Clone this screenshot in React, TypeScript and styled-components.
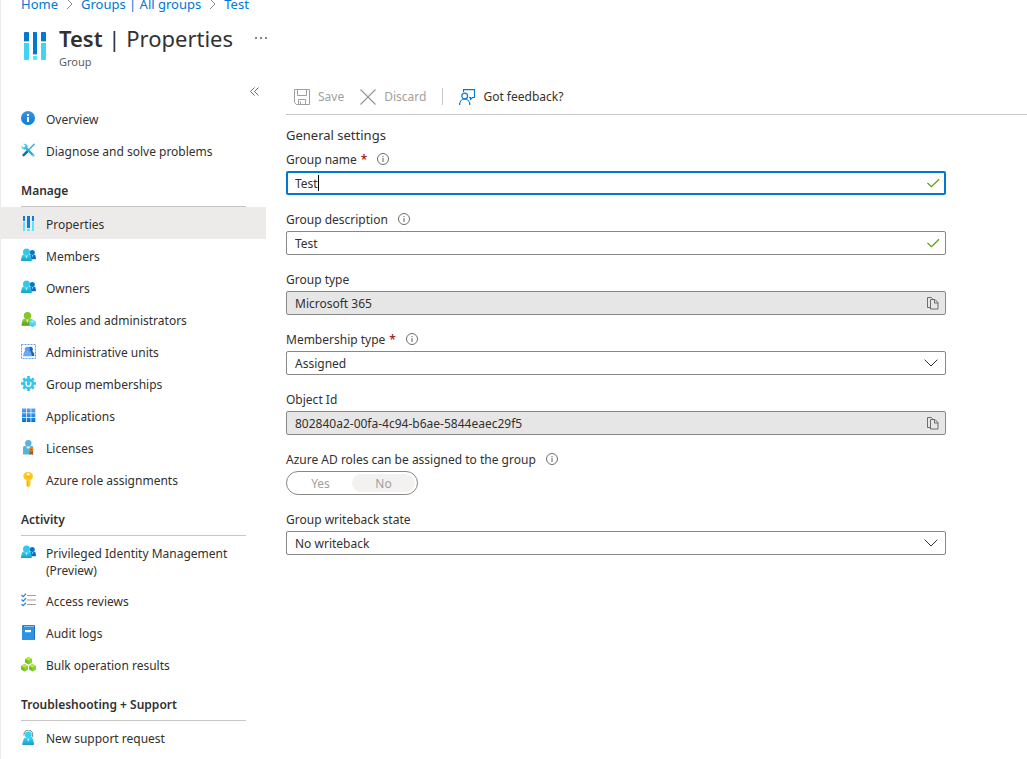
import React from "react";
import styled, { createGlobalStyle, css } from "styled-components";

const GlobalStyle = createGlobalStyle`
  *, *::before, *::after { box-sizing: border-box; }
  body {
    margin: 0;
    background: #fff;
    color: #323130;
    font-family: "Noto Sans", "Open Sans", sans-serif;
    font-size: 12px;
    line-height: 17px;
  }
  button, input, select { font: inherit; color: inherit; }
`;

const Page = styled.div`
  min-height: 100vh;
  border-left: 1px solid #edebe9;
  overflow: hidden;
`;

const Breadcrumb = styled.nav`
  display: flex;
  align-items: center;
  gap: 8px;
  height: 8px;
  padding-left: 20px;
  font-size: 13px;
  line-height: 8px;
  white-space: nowrap;
  a { color: #0078d4; text-decoration: none; }
`;

const Header = styled.header`
  display: flex;
  align-items: flex-start;
  padding: 16px 20px 0;
  height: 71px;
`;

const HeaderIcon = styled.span`
  display: flex;
  width: 28px;
  margin: 8px 10px 0 0;
`;

const Title = styled.h1`
  margin: 0;
  font-size: 22px;
  line-height: 28px;
  font-weight: 400;
  white-space: nowrap;
  strong { font-weight: 600; }
`;

const Subtitle = styled.div`
  margin-top: 1px;
  color: #605e5c;
  font-size: 11px;
  line-height: 17px;
`;

const IconButton = styled.button`
  display: flex;
  align-items: center;
  justify-content: center;
  width: 24px;
  height: 24px;
  padding: 0;
  border: 0;
  background: none;
  color: #605e5c;
`;

const MoreButton = styled(IconButton)`
  margin: 2px 0 0 16px;
`;

const Body = styled.div`
  display: flex;
  align-items: flex-start;
`;

const Sidebar = styled.nav`
  flex: none;
  width: 265px;
`;

const CollapseRow = styled.div`
  display: flex;
  justify-content: flex-end;
  height: 23px;
`;

const NavHeading = styled.h2`
  display: flex;
  align-items: flex-end;
  height: 41px;
  margin: 0 20px;
  padding-bottom: 7px;
  border-bottom: 1px solid #c8c6c4;
  font-size: 12px;
  line-height: 17px;
  font-weight: 600;
`;

const NavList = styled.ul`
  margin: 0;
  padding: 0;
  list-style: none;
`;

const NavLink = styled.a<{ $active?: boolean }>`
  display: flex;
  gap: 9px;
  min-height: 32px;
  padding: 9px 20px 5px;
  background: ${(p) => (p.$active ? "#edebe9" : "transparent")};
  color: inherit;
  text-decoration: none;
  svg { flex: none; }
`;

const Main = styled.main`
  flex: 1;
  min-width: 0;
  padding-left: 20px;
`;

const Toolbar = styled.div`
  display: flex;
  align-items: center;
  height: 36px;
  padding: 0 8px;
  border-bottom: 1px solid #c8c6c4;
`;

const ToolButton = styled.button`
  display: flex;
  align-items: center;
  gap: 8px;
  margin-right: 16px;
  padding: 0;
  border: 0;
  background: none;
  color: #323130;
  white-space: nowrap;
  &:disabled { color: #a19f9d; }
`;

const Divider = styled.span`
  width: 1px;
  height: 17px;
  margin-right: 16px;
  background: #c8c6c4;
`;

const Form = styled.form`
  display: flex;
  flex-direction: column;
  gap: 12px;
  max-width: 660px;
  padding-top: 12px;
  margin-right: 20px;
`;

const FormTitle = styled.h2`
  margin: 0 0 -12px;
  font-size: 13px;
  line-height: 17px;
  height: 20px;
  font-weight: 400;
`;

const Field = styled.div``;

const LabelRow = styled.div`
  display: flex;
  align-items: center;
  gap: 10px;
  height: 24px;
`;

const Required = styled.span`
  color: #a4262c;
  font-weight: 600;
`;

type BoxState = "normal" | "focused" | "readonly";

const Box = styled.div<{ $state: BoxState }>`
  position: relative;
  display: flex;
  align-items: center;
  height: 24px;
  padding: 0 5px 0 8px;
  border: 1px solid #8a8886;
  border-radius: 2px;
  background: ${(p) => (p.$state === "readonly" ? "#e6e6e6" : "#fff")};
  ${(p) =>
    p.$state === "focused" &&
    css`
      padding: 0 4px 0 7px;
      border: 2px solid #0078d4;
    `}
`;

const TextInput = styled.input<{ $fit?: boolean }>`
  flex: ${(p) => (p.$fit ? "none" : "1")};
  ${(p) => p.$fit && "field-sizing: content;"}
  min-width: 0;
  padding: 0;
  border: 0;
  outline: 0;
  background: none;
  line-height: 17px;
`;

const Caret = styled.span`
  width: 1px;
  height: 16px;
  background: #000;
`;

const Trailing = styled.span`
  display: flex;
  margin-left: auto;
`;

const Select = styled.select`
  position: absolute;
  inset: 0;
  width: 100%;
  padding: 0 28px 0 8px;
  border: 0;
  outline: 0;
  background: none;
  appearance: none;
`;

const CopyButton = styled(IconButton)`
  width: 14px;
  height: 14px;
`;

const Toggle = styled.div`
  display: flex;
  width: 132px;
  height: 24px;
  padding: 2px;
  border: 1px solid #8a8886;
  border-radius: 12px;
`;

const ToggleOption = styled.label`
  flex: 1;
  display: flex;
  align-items: center;
  justify-content: center;
  border-radius: 10px;
  color: #a19f9d;
  &:has(input:checked) { background: #f3f2f1; }
  input {
    appearance: none;
    width: 0;
    height: 0;
    margin: 0;
  }
`;

const Svg = ({ children, size = 16, box = 16 }: { children: React.ReactNode; size?: number; box?: number }) => (
  <svg width={size} height={size} viewBox={`0 0 ${box} ${box}`} fill="none" aria-hidden="true">
    {children}
  </svg>
);

const GradientDefs = styled.svg`
  display: block;
`;

const Gradients = () => (
  <GradientDefs width="0" height="0" aria-hidden="true">
    <defs>
      <linearGradient id="cyan" x1="0" y1="0" x2="0" y2="1">
        <stop offset="0" stopColor="#32d4f5" />
        <stop offset="1" stopColor="#1e9cc4" />
      </linearGradient>
      <linearGradient id="blue" x1="0" y1="0" x2="0" y2="1">
        <stop offset="0" stopColor="#5ea0ef" />
        <stop offset="1" stopColor="#0078d4" />
      </linearGradient>
      <linearGradient id="green" x1="0" y1="0" x2="0" y2="1">
        <stop offset="0" stopColor="#86d633" />
        <stop offset="1" stopColor="#5e9624" />
      </linearGradient>
    </defs>
  </GradientDefs>
);

const HeaderBars = () => (
  <svg width="28" height="30" viewBox="0 0 28 30" aria-hidden="true">
    <path d="M3 11h5v16a1 1 0 0 1-1 1H4a1 1 0 0 1-1-1zM20 11h5v16a1 1 0 0 1-1 1h-3a1 1 0 0 1-1-1z" fill="#42d3f2" />
    <path d="M12 24h4v3a1 1 0 0 1-1 1h-2a1 1 0 0 1-1-1z" fill="#50e6ff" />
    <path d="M4 0h3a1 1 0 0 1 1 1v8H3V1a1 1 0 0 1 1-1zM21 0h3a1 1 0 0 1 1 1v8h-5V1a1 1 0 0 1 1-1zM12 0h3a1 1 0 0 1 1 1v21h-4z" fill="#0078d4" />
    <path d="M3 9h5v1H3zM20 9h5v1h-5zM12 22h4v1h-4z" fill="#c8c6c4" />
  </svg>
);

const InfoFilled = () => (
  <Svg>
    <circle cx="7" cy="7" r="7" fill="url(#blue)" />
    <circle cx="7" cy="7" r="6.6" fill="#1a86dc" opacity=".5" />
    <path d="M6 6h2v5H6zM6 3h2v2H6z" fill="#fff" />
  </Svg>
);

const Tools = () => (
  <Svg>
    <path d="M13.2 1.2 8 6.5" stroke="#32a9d6" strokeWidth="1.3" strokeLinecap="round" />
    <path d="M7.2 7.6 2.6 12.2" stroke="#0f6cbd" strokeWidth="2.6" strokeLinecap="round" />
    <path d="m4.5 4.5 7.8 7.8" stroke="#1fb2dc" strokeWidth="2.4" strokeLinecap="round" />
    <path d="M2.200.8 4.600 2.600 4 4.300 2.100 4.600.5 2.600C.3 5 1.800 6.800 4 6.700L6.800 4C6.800 2 4.800.2 2.200.8z" fill="#32c8ee" />
    <circle cx="12.100" cy="12.100" r=".7" fill="#fff" />
  </Svg>
);

const Bars = () => (
  <Svg>
    <path d="M2 6h2v9H2zM11 6h2v9h-2zM6 13h3v2H6z" fill="#50e6ff" />
    <path d="M2 0h2v5H2zM11 0h2v5h-2zM6 0h3v12H6z" fill="#0f7cd6" />
  </Svg>
);

const People = () => (
  <Svg>
    <circle cx="11.300" cy="4.500" r="2.500" fill="#0078d4" />
    <path d="M9 6.800h4a1.500 1.500 0 0 1 1.600 1.300l.4 2.200a.8.8 0 0 1-.8 1H9z" fill="#0f6cc8" />
    <path d="m10.800 7.200.8 1.800.8-1.800z" fill="#cfe4fa" />
    <circle cx="5.500" cy="4" r="3.500" fill="#32c8ee" />
    <path d="M3 6.500h5a2 2 0 0 1 2 1.600l.8 3.600a1 1 0 0 1-1 1.300H1a1 1 0 0 1-1-1.300l.9-3.600A2 2 0 0 1 3 6.500z" fill="url(#cyan)" />
    <path d="m4.200 7.500 1.300 3 1.300-3z" fill="#b5eefb" />
  </Svg>
);

const RolePerson = () => (
  <Svg>
    <circle cx="6.500" cy="3.800" r="3.700" fill="#86c727" />
    <path d="M3.500 6.800h6a2 2 0 0 1 2 1.600l.8 4a1 1 0 0 1-1 1.300H1.500a1 1 0 0 1-1-1.300l1-4a2 2 0 0 1 2-1.600z" fill="url(#green)" />
    <path d="m5 7.500 1.500 3.500L8 7.500z" fill="#d7efb5" />
    <path d="m11.500 7.500 3.300 2v3.700l-3.300 2-3.300-2V9.500z" fill="#50d0f0" />
    <path d="m11.500 7.500 3.300 2-3.300 1.900-3.300-1.900z" fill="#7fe3fb" />
  </Svg>
);

const AdminUnits = () => (
  <Svg>
    <rect x=".5" y=".5" width="14" height="14" stroke="#5ea0ef" strokeDasharray="2 1" />
    <circle cx="9.500" cy="5.200" r="2.400" fill="#1266bf" />
    <path d="M8 6.500h3l2.200 3V12H8z" fill="#1266bf" />
    <circle cx="6.300" cy="5.200" r="2.500" fill="#5ea0ef" />
    <path d="M4.200 7h4.300a1.500 1.500 0 0 1 1.400 1l1.200 4.200H2L3 8a1.300 1.300 0 0 1 1.200-1z" fill="#6aa9f4" />
  </Svg>
);

const Gear = () => (
  <Svg>
    <g stroke="#32bfe8" strokeWidth="2.600">
      <path d="M7.500 0v15M0 7.500h15M2.300 2.300l10.400 10.400M12.700 2.300 2.300 12.700" />
    </g>
    <circle cx="7.500" cy="7.500" r="5.600" fill="#32c8ee" />
    <path d="M5.200 6v2a2.300 2.300 0 0 0 4.600 0V6" stroke="#fff" strokeWidth="1.300" />
    <path d="m3.800 6.700 1.400-1.800 1.400 1.800z" fill="#fff" />
  </Svg>
);

const AppGrid = () => (
  <Svg>
    <path
      d="M1 .5h4v4H1zM5.700.5h3.900v4H5.700zM10.300.5h4v4h-4zM1 5.300h4v4H1zM5.700 5.300h3.900v4H5.700zM10.300 5.300h4v4h-4zM1 10.100h4v4H1zM5.700 10.100h3.900v4H5.700zM10.300 10.100h4v4h-4z"
      fill="url(#blue)"
    />
  </Svg>
);

const License = () => (
  <Svg>
    <circle cx="7.300" cy="3.300" r="3.200" fill="#59b4d9" />
    <path d="M3.500 6h7.700a1 1 0 0 1 1 1v7.500H2V7.500A1.500 1.500 0 0 1 3.500 6z" fill="#59b4d9" />
    <path d="M5 6.500h4.600L7.300 9z" fill="#e9f6fb" />
    <path d="M8.600 11h3.400v4l-1.700-1-1.700 1z" fill="#a5582a" />
    <circle cx="10.300" cy="9.600" r="2.100" fill="#e8871e" />
    <circle cx="10.300" cy="9.600" r=".9" fill="#b85a1a" />
  </Svg>
);

const KeyIcon = () => (
  <Svg>
    <path
      d="M7.200 0c3 0 4.800 1.900 4.800 4.200 0 1.800-1.200 3.200-2.600 4v5.300L7.200 15.500 5.500 14V8.200C3.700 7.400 2.300 6 2.300 4.200 2.300 1.900 4.200 0 7.200 0z"
      fill="#ffc81f"
    />
    <circle cx="7.200" cy="2.300" r="1.200" fill="#fff" />
    <path d="M6.400 9.500v4.600" stroke="#f0a81a" />
    <path d="M4.500 5h5.400" stroke="#f0a81a" strokeWidth=".8" />
  </Svg>
);

const Checklist = () => (
  <Svg>
    <path d="M6 2.500h9M6 7h9M6 11.500h9" stroke="#a0a0a0" strokeWidth="1.200" />
    <path d="m.5 2 1.700 1.600L5 .6M.5 6.500l1.700 1.600L5 5.100M.5 11l1.700 1.600L5 9.600" stroke="#2f80d8" strokeWidth="1.300" />
  </Svg>
);

const Book = () => (
  <Svg>
    <path d="M2.500 0H13a1 1 0 0 1 1 1v13a1 1 0 0 1-1 1H2.500A1.500 1.500 0 0 1 1 13.500v-12A1.500 1.500 0 0 1 2.500 0z" fill="#1a6fc0" />
    <path d="M3 .8h10v1.500H3z" fill="#9fcdf5" />
    <path d="M2.500 1.800H12a1 1 0 0 1 1 1V14a1 1 0 0 1-1 1H2.500A1.500 1.500 0 0 1 1 13.500V2.500z" fill="#2f93e4" />
    <path d="M4 5h6v2.200H4z" fill="#fff" />
  </Svg>
);

const Cube = ({ x, y }: { x: number; y: number }) => (
  <g transform={`translate(${x} ${y})`}>
    <path d="m3.500 0 3.500 1.900v3.700L3.500 7.500 0 5.600V1.900z" fill="#76bc2d" />
    <path d="m3.500 0 3.500 1.900-3.500 1.800L0 1.900z" fill="#b4ec36" />
    <path d="m3.500 3.700 3.500-1.800v3.700L3.500 7.500z" fill="#86d633" />
  </g>
);

const Cubes = () => (
  <Svg>
    <Cube x={4} y={0} />
    <Cube x={0} y={7} />
    <Cube x={8} y={7} />
  </Svg>
);

const SupportPerson = () => (
  <Svg>
    <path d="M3 5.500V4.300a4.200 4.200 0 0 1 8.600 0v1.900c0 1-.8 1.500-1.800 1.500" stroke="#767676" strokeWidth="1" />
    <circle cx="7.300" cy="4.800" r="3.400" fill="#32d4f5" />
    <path d="M4.500 7.800h5.600a2 2 0 0 1 2 1.600l1 4.300a1 1 0 0 1-1 1.300H2.300a1 1 0 0 1-1-1.300l1.200-4.300a2 2 0 0 1 2-1.600z" fill="url(#cyan)" />
    <path d="m6 8.500 1.300 3.500 1.300-3.500z" fill="#b5eefb" />
  </Svg>
);

const Chevron = () => (
  <svg width="7" height="12" viewBox="0 0 7 12" fill="none" aria-hidden="true">
    <path d="m1 1 5 5-5 5" stroke="#8a8886" />
  </svg>
);

const InfoOutline = () => (
  <svg width="12" height="12" viewBox="0 0 12 12" fill="none" role="img" aria-label="Information">
    <circle cx="6" cy="6" r="5.500" stroke="#605e5c" strokeWidth=".9" />
    <path d="M6 5v4M6 3v1.100" stroke="#605e5c" />
  </svg>
);

const Check = () => (
  <svg width="14" height="12" viewBox="0 0 14 12" fill="none" aria-hidden="true">
    <path d="m1.500 6 4 3.700 7.500-7.400" stroke="#57a300" strokeWidth="1.200" />
  </svg>
);

const Copy = () => (
  <Svg size={14} box={14}>
    <path d="M4.500 11.500h-3V1.500h4l1.200 1.200M4.500 3.500h4.500l3 3v6.500H4.500zM8.500 3.500v3.500h3.500" stroke="#605e5c" strokeWidth=".9" />
  </Svg>
);

const SelectArrow = styled.svg`
  margin: 0 2px 0 auto;
`;

const Dropdown = ({ id, value }: { id: string; value: string }) => (
  <Box $state="normal">
    <SelectArrow width="14" height="8" viewBox="0 0 14 8" fill="none" aria-hidden="true">
      <path d="m.7.700 6.300 6.300L13.300.700" stroke="#323130" strokeWidth="1" />
    </SelectArrow>
    <Select id={id} defaultValue={value}>
      <option>{value}</option>
    </Select>
  </Box>
);

const ReadOnly = ({ id, value }: { id: string; value: string }) => (
  <Box $state="readonly">
    <TextInput id={id} value={value} readOnly />
    <CopyButton type="button" aria-label="Copy to clipboard">
      <Copy />
    </CopyButton>
  </Box>
);

interface LabelProps {
  htmlFor?: string;
  id?: string;
  text: string;
  required?: boolean;
  info?: boolean;
}

const LabelText = styled.span`
  display: flex;
  gap: 4px;
`;

const FieldLabel = ({ htmlFor, id, text, required, info }: LabelProps) => (
  <LabelRow>
    <LabelText>
      <label htmlFor={htmlFor} id={id}>{text}</label>
      {required && <Required>*</Required>}
    </LabelText>
    {info && <InfoOutline />}
  </LabelRow>
);

interface Item {
  label: string;
  icon: React.ReactNode;
  active?: boolean;
}

const sections: { title?: string; items: Item[] }[] = [
  {
    items: [
      { label: "Overview", icon: <InfoFilled /> },
      { label: "Diagnose and solve problems", icon: <Tools /> },
    ],
  },
  {
    title: "Manage",
    items: [
      { label: "Properties", icon: <Bars />, active: true },
      { label: "Members", icon: <People /> },
      { label: "Owners", icon: <People /> },
      { label: "Roles and administrators", icon: <RolePerson /> },
      { label: "Administrative units", icon: <AdminUnits /> },
      { label: "Group memberships", icon: <Gear /> },
      { label: "Applications", icon: <AppGrid /> },
      { label: "Licenses", icon: <License /> },
      { label: "Azure role assignments", icon: <KeyIcon /> },
    ],
  },
  {
    title: "Activity",
    items: [
      { label: "Privileged Identity Management (Preview)", icon: <People /> },
      { label: "Access reviews", icon: <Checklist /> },
      { label: "Audit logs", icon: <Book /> },
      { label: "Bulk operation results", icon: <Cubes /> },
    ],
  },
  {
    title: "Troubleshooting + Support",
    items: [{ label: "New support request", icon: <SupportPerson /> }],
  },
];

export default function App() {
  return (
    <Page>
      <GlobalStyle />
      <Gradients />
      <Breadcrumb aria-label="Breadcrumb">
        <a href="#home">Home</a>
        <Chevron />
        <a href="#groups">Groups | All groups</a>
        <Chevron />
        <a href="#test">Test</a>
      </Breadcrumb>
      <Header>
        <HeaderIcon>
          <HeaderBars />
        </HeaderIcon>
        <div>
          <Title>
            <strong>Test</strong> | Properties
          </Title>
          <Subtitle>Group</Subtitle>
        </div>
        <MoreButton aria-label="More">
          <Svg>
            <path d="M2 8h2M7 8h2M12 8h2" stroke="#605e5c" strokeWidth="1.500" />
          </Svg>
        </MoreButton>
      </Header>
      <Body>
        <Sidebar aria-label="Group menu">
          <CollapseRow>
            <IconButton aria-label="Collapse menu">
              <svg width="9" height="9" viewBox="0 0 9 9" fill="none" aria-hidden="true">
                <path d="M4.500.5l-4 4 4 4M8.500.5l-4 4 4 4" stroke="#605e5c" strokeWidth=".9" />
              </svg>
            </IconButton>
          </CollapseRow>
          {sections.map((section) => (
            <React.Fragment key={section.title ?? "top"}>
              {section.title && <NavHeading>{section.title}</NavHeading>}
              <NavList>
                {section.items.map((item) => (
                  <li key={item.label}>
                    <NavLink href="#blade" $active={item.active} aria-current={item.active ? "page" : undefined}>
                      {item.icon}
                      {item.label}
                    </NavLink>
                  </li>
                ))}
              </NavList>
            </React.Fragment>
          ))}
        </Sidebar>
        <Main>
          <Toolbar>
            <ToolButton disabled>
              <Svg>
                <path d="M.500.500h15v15h-13l-2-2zM3.500.500v6h9v-6M4.500 15.500v-5h7v5M6.500 12.500v3" stroke="#a19f9d" />
              </Svg>
              Save
            </ToolButton>
            <ToolButton disabled>
              <Svg>
                <path d="m.5.5 15 15M15.500.5l-15 15" stroke="#979593" strokeWidth="1.100" />
              </Svg>
              Discard
            </ToolButton>
            <Divider />
            <ToolButton>
              <Svg>
                <path d="M4.500 3V.6h11v7.900h-2l-2 2v-2h-1.500" stroke="#0078d4" strokeWidth="1.100" />
                <circle cx="5.700" cy="7" r="2.900" stroke="#0078d4" strokeWidth="1.200" />
                <path d="M.6 16c0-3.300 2-6 5.100-6s5.100 2.700 5.100 6" stroke="#0078d4" strokeWidth="1.200" />
              </Svg>
              Got feedback?
            </ToolButton>
          </Toolbar>
          <Form>
            <FormTitle>General settings</FormTitle>
            <Field>
              <FieldLabel htmlFor="name" text="Group name" required info />
              <Box $state="focused">
                <TextInput id="name" defaultValue="Test" $fit />
                <Caret />
                <Trailing>
                  <Check />
                </Trailing>
              </Box>
            </Field>
            <Field>
              <FieldLabel htmlFor="description" text="Group description" info />
              <Box $state="normal">
                <TextInput id="description" defaultValue="Test" />
                <Trailing>
                  <Check />
                </Trailing>
              </Box>
            </Field>
            <Field>
              <FieldLabel htmlFor="type" text="Group type" />
              <ReadOnly id="type" value="Microsoft 365" />
            </Field>
            <Field>
              <FieldLabel htmlFor="membership" text="Membership type" required info />
              <Dropdown id="membership" value="Assigned" />
            </Field>
            <Field>
              <FieldLabel htmlFor="object-id" text="Object Id" />
              <ReadOnly id="object-id" value="802840a2-00fa-4c94-b6ae-5844eaec29f5" />
            </Field>
            <Field>
              <FieldLabel id="roles-label" text="Azure AD roles can be assigned to the group" info />
              <Toggle role="radiogroup" aria-labelledby="roles-label">
                <ToggleOption>
                  <input type="radio" name="roles" disabled />
                  Yes
                </ToggleOption>
                <ToggleOption>
                  <input type="radio" name="roles" defaultChecked disabled />
                  No
                </ToggleOption>
              </Toggle>
            </Field>
            <Field>
              <FieldLabel htmlFor="writeback" text="Group writeback state" />
              <Dropdown id="writeback" value="No writeback" />
            </Field>
          </Form>
        </Main>
      </Body>
    </Page>
  );
}
